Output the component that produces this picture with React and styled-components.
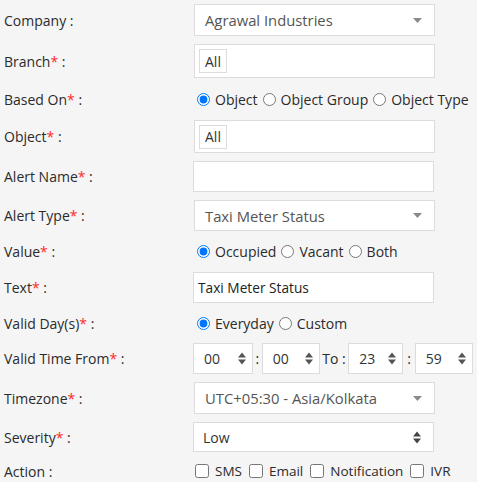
import React from "react";
import styled, { createGlobalStyle } from "styled-components";

const Global = createGlobalStyle`
  html, body { margin: 0; padding: 0; background: #f5f5f5; }
  body { font-family: "Open Sans", "Noto Sans", sans-serif; font-size: 14px; color: #2b2b2b; }
  * { box-sizing: border-box; }
`;

const Form = styled.div`
  display: flex;
  flex-direction: column;
  gap: 8px;
  padding: 4px 0 0 4px;
  width: 477px;
`;

const Row = styled.div`
  display: flex;
  align-items: center;
  height: ${(p) => p.h}px;
`;

const Label = styled.div`
  width: 189px;
  flex: none;
  color: #2b2b2b;
  white-space: nowrap;
`;

const Req = styled.span`
  color: #ff2a2a;
`;

const Box = styled.div`
  width: 241px;
  height: 100%;
  margin-left: ${(p) => p.ml || 0}px;
  background: #fff;
  border: 1px solid #dcdcdc;
  display: flex;
  align-items: center;
  padding-left: ${(p) => p.pl || 0}px;
  padding-right: 12px;
  color: ${(p) => p.color || "#555"};
  font-size: ${(p) => p.fs || 14}px;
`;

const Value = styled.span`
  flex: 1;
  white-space: nowrap;
`;

const Tag = styled.span`
  height: 24px;
  padding: 0 5px;
  border: 1px solid #dcdcdc;
  display: inline-flex;
  align-items: center;
  color: #333;
  font-size: 14px;
`;

const Choices = styled.div`
  display: flex;
  align-items: center;
  color: #2b2b2b;
  white-space: nowrap;
  font-size: ${(p) => p.fs || 14}px;
  margin-left: ${(p) => p.ml || 0}px;
`;

const Radio = styled.input.attrs({ type: "radio" })`
  margin: 0 5px 0 ${(p) => (p.first ? 0 : 5)}px;
  width: 13px;
  height: 13px;
`;

const Check = styled.input.attrs({ type: "checkbox" })`
  margin: 0 6px 0 ${(p) => (p.first ? 0 : 7)}px;
  width: 14px;
  height: 14px;
`;

const TimeBox = styled.div`
  width: ${(p) => p.w}px;
  height: 100%;
  background: #fff;
  border: 1px solid #dcdcdc;
  display: flex;
  align-items: center;
  padding: 0 6px 0 10px;
  color: #333;
`;

const Sep = styled.span`
  color: #2b2b2b;
  padding: 0 ${(p) => p.px}px;
`;

const Caret = () => (
  <svg width="9" height="5" viewBox="0 0 9 5">
    <path d="M0 0 H9 L4.5 5 Z" fill="#8a8a8a" />
  </svg>
);

const UpDown = ({ color = "#555" }) => (
  <svg width="8" height="13" viewBox="0 0 8 13">
    <path d="M0 5.5 L4 0.5 L8 5.5 Z M0 7.5 L4 12.5 L8 7.5 Z" fill={color} />
  </svg>
);

const L = ({ children, req }) => (
  <Label>
    {children}
    {req && <Req>*</Req>} :
  </Label>
);

export default function App() {
  return (
    <>
      <Global />
      <Form>
        <Row h={32}>
          <Label>Company :</Label>
          <Box ml={1} pl={10} fs={14.8}>
            <Value>Agrawal Industries</Value>
            <Caret />
          </Box>
        </Row>
        <Row h={34}>
          <L req>Branch</L>
          <Box ml={1} pl={4}>
            <Tag>All</Tag>
          </Box>
        </Row>
        <Row h={26}>
          <L req>Based On</L>
          <Choices ml={4}>
            <Radio first name="b" defaultChecked />Object
            <Radio name="b" />Object Group
            <Radio name="b" />Object Type
          </Choices>
        </Row>
        <Row h={33}>
          <L req>Object</L>
          <Box ml={1} pl={4}>
            <Tag>All</Tag>
          </Box>
        </Row>
        <Row h={31}>
          <L req>Alert Name</L>
          <Box />
        </Row>
        <Row h={31}>
          <L req>Alert Type</L>
          <Box ml={1} pl={10} fs={14.8}>
            <Value>Taxi Meter Status</Value>
            <Caret />
          </Box>
        </Row>
        <Row h={25}>
          <L req>Value</L>
          <Choices ml={4}>
            <Radio first name="v" defaultChecked />Occupied
            <Radio name="v" />Vacant
            <Radio name="v" />Both
          </Choices>
        </Row>
        <Row h={31}>
          <L req>Text</L>
          <Box pl={4} color="#222" fs={13.7}>
            <Value>Taxi Meter Status</Value>
          </Box>
        </Row>
        <Row h={24}>
          <L req>Valid Day(s)</L>
          <Choices ml={4}>
            <Radio first name="d" defaultChecked />Everyday
            <Radio name="d" />Custom
          </Choices>
        </Row>
        <Row h={31}>
          <L req>Valid Time From</L>
          <TimeBox w={60}>
            <Value>00</Value>
            <UpDown />
          </TimeBox>
          <Sep px={2.5}>:</Sep>
          <TimeBox w={58}>
            <Value>00</Value>
            <UpDown />
          </TimeBox>
          <Sep px={2.5}>To :</Sep>
          <TimeBox w={55}>
            <Value>23</Value>
            <UpDown />
          </TimeBox>
          <Sep px={4}>:</Sep>
          <TimeBox w={58}>
            <Value>59</Value>
            <UpDown />
          </TimeBox>
        </Row>
        <Row h={32}>
          <L req>Timezone</L>
          <Box ml={1} pl={10} fs={14.8}>
            <Value>UTC+05:30 - Asia/Kolkata</Value>
            <Caret />
          </Box>
        </Row>
        <Row h={30}>
          <L req>Severity</L>
          <Box pl={9} color="#333">
            <Value>Low</Value>
            <UpDown color="#444" />
          </Box>
        </Row>
        <Row h={22}>
          <Label>Action :</Label>
          <Choices ml={2} fs={13.5}>
            <Check first />SMS
            <Check />Email
            <Check />Notification
            <Check />IVR
          </Choices>
        </Row>
      </Form>
    </>
  );
}
